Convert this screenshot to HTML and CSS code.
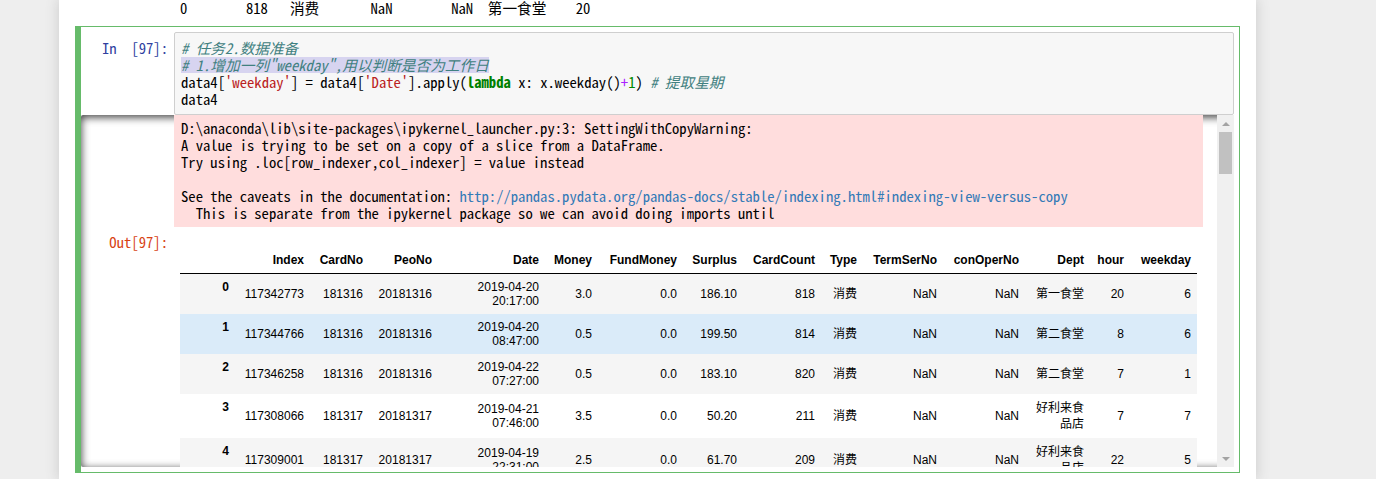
FILE: index.html
```html
<!DOCTYPE html>
<html lang="zh">
<head>
<meta charset="utf-8">
<title>Notebook</title>
<link rel="stylesheet" href="styles.css">
</head>
<body>
<div class="container">
  <pre class="mono prev-out">0        818   消费       NaN        NaN  第一食堂    20</pre>
  <div class="cell">
    <div class="input">
      <div class="mono prompt in-prompt">In  [97]:</div>
      <div class="input-area">
<pre class="mono code"><span class="cm"># 任务2.数据准备</span>
<span class="sel"><span class="cm"># 1.增加一列"weekday",用以判断是否为工作日</span></span>
data4[<span class="st">'weekday'</span>] = data4[<span class="st">'Date'</span>].apply(<span class="kw">lambda</span> x: x.weekday()<span class="op">+</span><span class="nm">1</span>) <span class="cm"># 提取星期</span>
data4</pre>
      </div>
    </div>
    <div class="output-scroll">
      <div class="output-content">
        <div class="out-row">
          <div class="mono prompt"></div>
          <div class="stderr">
<pre class="mono stderr-text">D:\anaconda\lib\site-packages\ipykernel_launcher.py:3: SettingWithCopyWarning:
A value is trying to be set on a copy of a slice from a DataFrame.
Try using .loc[row_indexer,col_indexer] = value instead

See the caveats in the documentation: <a class="link" href="#">http://pandas.pydata.org/pandas-docs/stable/indexing.html#indexing-view-versus-copy</a>
  This is separate from the ipykernel package so we can avoid doing imports until</pre>
          </div>
        </div>
        <div class="out-row">
          <div class="mono prompt out-prompt">Out[97]:</div>
          <div class="subarea">
            <table class="df">
              <colgroup>
                <col style="width:55px"><col style="width:75px"><col style="width:59px"><col style="width:69px">
                <col style="width:107px"><col style="width:53px"><col style="width:85px"><col style="width:60px">
                <col style="width:78px"><col style="width:42px"><col style="width:80px"><col style="width:82px">
                <col style="width:65px"><col style="width:40px"><col style="width:67px">
              </colgroup>
              <thead>
                <tr><th></th><th>Index</th><th>CardNo</th><th>PeoNo</th><th>Date</th><th>Money</th><th>FundMoney</th><th>Surplus</th><th>CardCount</th><th>Type</th><th>TermSerNo</th><th>conOperNo</th><th>Dept</th><th>hour</th><th>weekday</th></tr>
              </thead>
              <tbody>
                <tr><th>0</th><td>117342773</td><td>181316</td><td>20181316</td><td>2019-04-20 20:17:00</td><td>3.0</td><td>0.0</td><td>186.10</td><td>818</td><td>消费</td><td>NaN</td><td>NaN</td><td class="dept">第一食堂</td><td>20</td><td>6</td></tr>
                <tr class="hover"><th>1</th><td>117344766</td><td>181316</td><td>20181316</td><td>2019-04-20 08:47:00</td><td>0.5</td><td>0.0</td><td>199.50</td><td>814</td><td>消费</td><td>NaN</td><td>NaN</td><td class="dept">第二食堂</td><td>8</td><td>6</td></tr>
                <tr><th>2</th><td>117346258</td><td>181316</td><td>20181316</td><td>2019-04-22 07:27:00</td><td>0.5</td><td>0.0</td><td>183.10</td><td>820</td><td>消费</td><td>NaN</td><td>NaN</td><td class="dept">第二食堂</td><td>7</td><td>1</td></tr>
                <tr><th>3</th><td>117308066</td><td>181317</td><td>20181317</td><td>2019-04-21 07:46:00</td><td>3.5</td><td>0.0</td><td>50.20</td><td>211</td><td>消费</td><td>NaN</td><td>NaN</td><td class="dept">好利来食品店</td><td>7</td><td>7</td></tr>
                <tr><th>4</th><td>117309001</td><td>181317</td><td>20181317</td><td>2019-04-19 22:31:00</td><td>2.5</td><td>0.0</td><td>61.70</td><td>209</td><td>消费</td><td>NaN</td><td>NaN</td><td class="dept">好利来食品店</td><td>22</td><td>5</td></tr>
              </tbody>
            </table>
          </div>
        </div>
      </div>
      <div class="scrollbar">
        <div class="sb-btn"><span class="tri-up"></span></div>
        <div class="thumb"></div>
        <div class="sb-space"></div>
        <div class="sb-btn"><span class="tri-down"></span></div>
      </div>
    </div>
  </div>
</div>
</body>
</html>
```

FILE: styles.css
```css
* { box-sizing: border-box; }
html, body { margin: 0; height: 100%; }
body {
  background: #eeeeee;
  overflow: hidden;
  color: #000;
  font-family: "Liberation Sans", "Noto Sans CJK SC", sans-serif;
}
.container {
  margin-left: 59px;
  width: 1197px;
  min-height: 100%;
  background: #fff;
  padding: 0 16px;
  box-shadow: 0 0 12px 1px rgba(87, 87, 87, 0.2);
}
.mono {
  font-family: "Noto Sans Mono CJK SC", "Noto Sans CJK SC", "Liberation Mono", monospace;
  font-size: 14.67px;
}
.prev-out {
  margin: 0;
  height: 26px;
  padding-left: 105px;
  line-height: 15px;
  white-space: pre;
}
.cell {
  border: 1px solid #66bb6a;
  border-left-width: 6px;
  padding: 5px 5px 5px 0;
}
.input { display: flex; }
.prompt {
  width: 93px;
  flex: none;
  text-align: right;
  padding-right: 6px;
  line-height: 17px;
  white-space: pre;
}
.in-prompt { color: #303f9f; padding-top: 7px; }
.out-prompt { color: #d84315; padding-top: 6px; }
.input-area {
  flex: 1;
  background: #f7f7f7;
  border: 1px solid #cfcfcf;
  border-radius: 2px;
  padding: 6px 0 7px 6px;
}
.code { margin: 0; line-height: 17px; }
.cm { color: #408080; font-style: italic; }
.st { color: #ba2121; }
.kw { color: #008000; font-weight: bold; }
.op { color: #aa22ff; }
.nm { color: #008800; }
.sel {
  display: inline-block;
  line-height: 17px;
  vertical-align: top;
  background: linear-gradient(#d7d4f0, #d7d4f0) 0 1px / 100% 16px no-repeat;
}
.output-scroll {
  display: flex;
  height: 352px;
  border-radius: 2px;
  box-shadow: inset 0 2px 8px rgba(0, 0, 0, 0.8);
}
.output-content {
  flex: 1;
  min-width: 0;
  overflow: hidden;
}
.out-row { display: flex; }
.stderr {
  flex: 1;
  margin-right: 14px;
  background: #fdd;
  padding: 4px 0 6px 7px;
}
.stderr-text { margin: 0; line-height: 17px; }
.link { color: #337ab7; text-decoration: none; }
.subarea {
  flex: 1;
  margin-right: 14px;
  padding: 20px 6px 0;
}
.df {
  border-collapse: collapse;
  table-layout: fixed;
  width: 1017px;
  font-size: 12px;
  line-height: 14px;
}
.df th, .df td {
  padding: 6px;
  text-align: right;
  vertical-align: middle;
}
.df thead th {
  vertical-align: bottom;
  border-bottom: 1px solid #000;
  font-weight: bold;
}
.df tbody th { vertical-align: top; font-weight: bold; }
.df tbody tr:nth-child(odd) { background: #f5f5f5; }
.df tbody tr.hover { background: #daebf9; }
.dept { line-height: 16px; }
.scrollbar {
  width: 17px;
  flex: none;
  background: #f0f0f0;
  display: flex;
  flex-direction: column;
}
.sb-btn {
  height: 17px;
  display: flex;
  align-items: center;
  justify-content: center;
}
.tri-up {
  width: 0; height: 0;
  border-left: 4px solid transparent;
  border-right: 4px solid transparent;
  border-bottom: 4px solid #a3a3a3;
}
.tri-down {
  width: 0; height: 0;
  border-left: 4px solid transparent;
  border-right: 4px solid transparent;
  border-top: 4px solid #a3a3a3;
}
.thumb {
  height: 42px;
  margin: 0 2px;
  background: #c1c1c1;
}
.sb-space { flex: 1; }
```
